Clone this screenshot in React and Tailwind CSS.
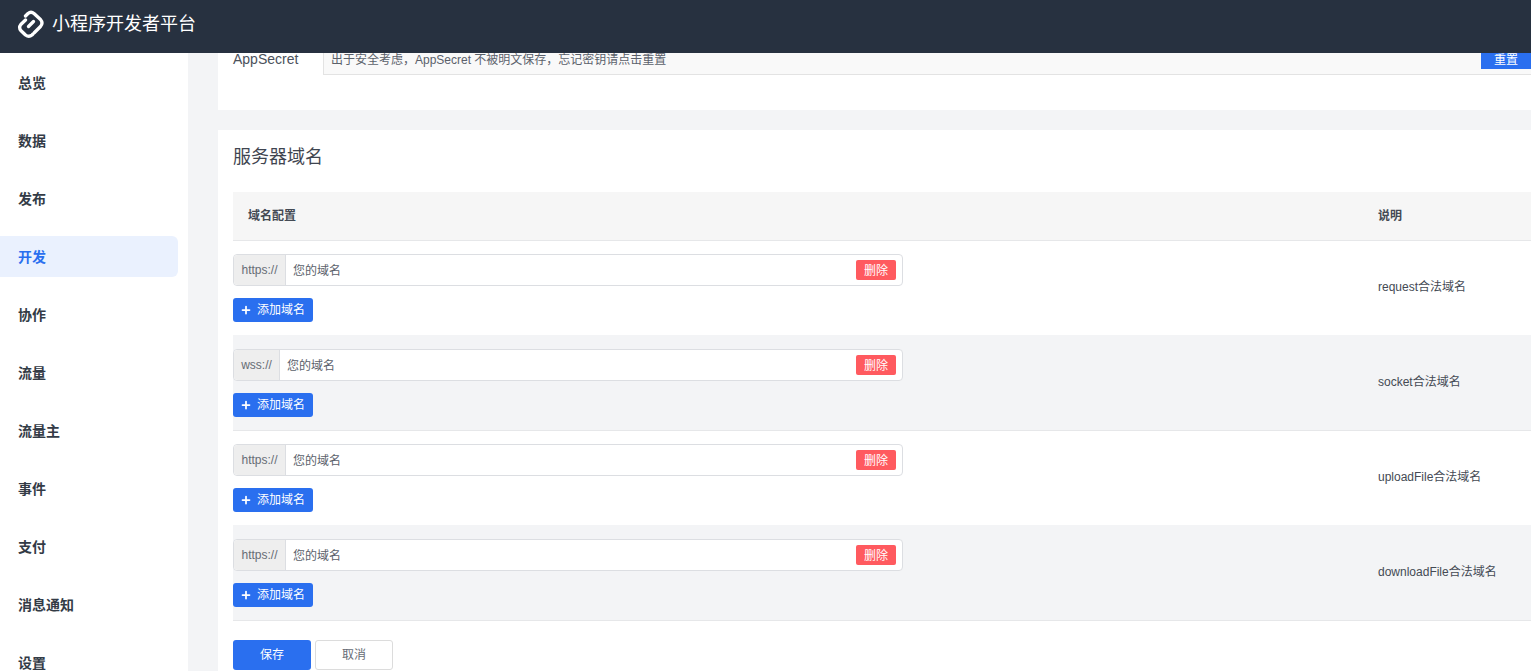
import { Plus } from "lucide-react";

const navItems = ["总览", "数据", "发布", "开发", "协作", "流量", "流量主", "事件", "支付", "消息通知", "设置"];

const domainRows = [
    { scheme: "https://", note: "request合法域名" },
    { scheme: "wss://", note: "socket合法域名", shaded: true },
    { scheme: "https://", note: "uploadFile合法域名" },
    { scheme: "https://", note: "downloadFile合法域名", shaded: true },
];

const Logo = () => (
    <svg width="28" height="28" viewBox="0 0 28 28" fill="none" stroke="white" strokeWidth="3.3" strokeLinecap="round" strokeLinejoin="round">
        <path d="M8.5 6 L11 3.5 Q14 1 17 3.5 L23.5 9.5 Q26.5 13 23.5 16.5 L17.5 22.5" />
        <path d="M8.5 10 L3.8 14.5 Q1.5 17.5 3.8 20.5 L8.5 25 Q12 27.5 15 25 L16 24" />
        <path d="M11.5 16.5 L16.5 11.5" />
    </svg>
);

const Sidebar = () => (
    <aside className="w-[188px] shrink-0 bg-white pt-[9px] pr-[10px]">
        {navItems.map((item) => (
            <div
                key={item}
                className={`h-[41px] mb-[17px] pl-[18px] flex items-center rounded-r-md text-sm font-semibold ${
                    item === "开发" ? "bg-[#eaf1fe] text-[#2a6fef]" : "text-[#333b46]"
                }`}
            >
                {item}
            </div>
        ))}
    </aside>
);

const DomainRow = ({ scheme, note, shaded }) => (
    <div className={`flex ${shaded ? "h-[96px] pt-[14px] bg-[#f3f4f6] border-b border-[#e6e7e9]" : "h-[94px] pt-[13px] bg-white"}`}>
        <div className="w-[670px] shrink-0">
            <div className="h-8 flex items-center border border-[#dcdee2] rounded bg-white">
                <span
                    className={`h-full flex items-center justify-center bg-[#eeeeee] border-r border-[#dcdee2] rounded-l text-xs text-[#666c75] ${
                        scheme === "wss://" ? "w-[46px]" : "w-[52px]"
                    }`}
                >
                    {scheme}
                </span>
                <span className="flex-1 pl-[7px] pt-[2px] text-xs text-[#5b616b]">您的域名</span>
                <button className="w-10 h-5 mr-[6px] pt-[2px] bg-[#ff5a5f] rounded-xs text-xs text-white">删除</button>
            </div>
            <button className="mt-3 w-20 h-6 flex items-center bg-[#2a6fef] rounded-[3px] pl-[7px] text-xs text-white">
                <Plus size={12} strokeWidth={3.5} />
                <span className="ml-[5px]">添加域名</span>
            </button>
        </div>
        <div className="ml-[475px] pt-[25px] text-xs text-[#444a54] whitespace-nowrap">{note}</div>
    </div>
);

export default function App() {
    return (
        <div className="h-screen flex flex-col overflow-hidden bg-[#f3f4f6] font-['Liberation_Sans','Noto_Sans_CJK_SC',sans-serif]">
            <header className="h-[53px] shrink-0 bg-[#273140] flex items-center pl-[17px] pb-[6px]">
                <Logo />
                <span className="ml-[7px] text-lg text-white">小程序开发者平台</span>
            </header>

            <div className="flex-1 flex min-h-0">
                <Sidebar />

                <main className="flex-1 min-w-0 pl-[30px] overflow-hidden">
                    <section className="h-[57px] bg-white pl-[15px] overflow-hidden">
                        <div className="-mt-[10px] flex">
                            <span className="w-[90px] mt-[10px] h-3 text-sm leading-[12px] text-[#4b515b]">AppSecret</span>
                            <div className="flex-1 h-8 flex items-start justify-between bg-[#f9f9f9] border-b border-l border-[#e3e3e3] pl-[7px]">
                                <span className="pt-[9px] text-xs text-[#5b616b]">出于安全考虑，AppSecret 不被明文保存，忘记密钥请点击重置</span>
                                <button className="w-[50px] h-[26px] pt-2 bg-[#2a6fef] text-xs text-white leading-none">重置</button>
                            </div>
                        </div>
                    </section>

                    <section className="mt-5 bg-white pl-[15px] min-h-[600px]">
                        <h2 className="h-[62px] pt-[13px] text-lg text-[#3f4550]">服务器域名</h2>
                        <div className="h-[49px] flex items-center bg-[#f6f6f6] border-b border-[#e6e7e9] text-xs font-semibold text-[#444a54]">
                            <span className="w-[1145px] pl-[15px]">域名配置</span>
                            <span>说明</span>
                        </div>
                        {domainRows.map((row, index) => (
                            <DomainRow key={index} {...row} />
                        ))}
                        <div className="mt-[19px] flex gap-1">
                            <button className="w-[78px] h-[30px] bg-[#2a6fef] rounded-[3px] text-xs text-white">保存</button>
                            <button className="w-[78px] h-[30px] bg-white border border-[#dcdcdc] rounded-[3px] text-xs text-[#666c75]">取消</button>
                        </div>
                    </section>
                </main>
            </div>
        </div>
    );
}
